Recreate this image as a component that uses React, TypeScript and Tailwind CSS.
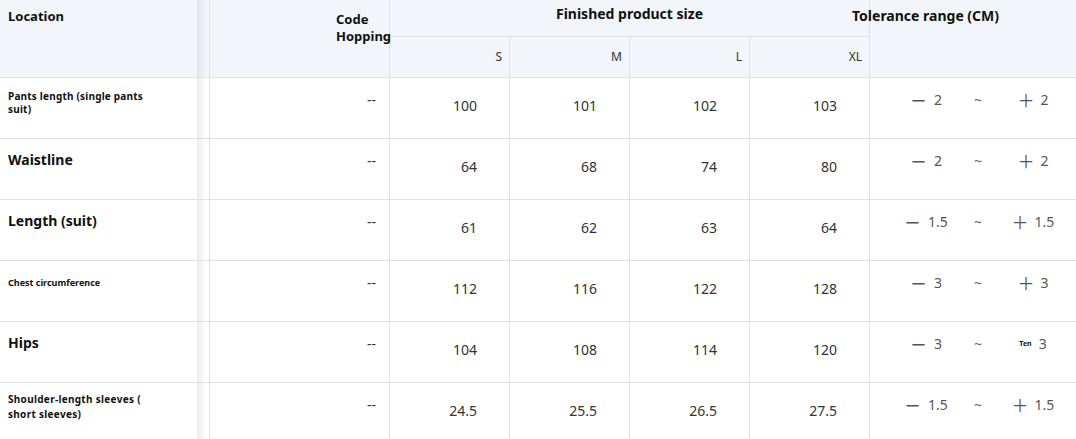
const cols = "grid grid-cols-[197px_13px_180px_120px_120px_120px_120px_1fr]";

type Row = {
  label: string;
  labelClass: string;
  values: string[];
  low: string;
  high: string;
  tenSign?: boolean;
};

const rows: Row[] = [
  {
    label: "Pants length (single pants suit)",
    labelClass: "pt-[12px] text-[10px] leading-[13px] tracking-[0.2px]",
    values: ["100", "101", "102", "103"],
    low: "2",
    high: "2",
  },
  {
    label: "Waistline",
    labelClass: "pt-[11px] text-[14px] leading-5",
    values: ["64", "68", "74", "80"],
    low: "2",
    high: "2",
  },
  {
    label: "Length (suit)",
    labelClass: "pt-[11px] text-[14px] leading-5",
    values: ["61", "62", "63", "64"],
    low: "1.5",
    high: "1.5",
  },
  {
    label: "Chest circumference",
    labelClass: "pt-[12px] text-[9px] leading-5",
    values: ["112", "116", "122", "128"],
    low: "3",
    high: "3",
  },
  {
    label: "Hips",
    labelClass: "pt-[11px] text-[14px] leading-5",
    values: ["104", "108", "114", "120"],
    low: "3",
    high: "3",
    tenSign: true,
  },
  {
    label: "Shoulder-length sleeves ( short sleeves)",
    labelClass: "pt-[9px] text-[10px] leading-[15px] tracking-[0.3px]",
    values: ["24.5", "25.5", "26.5", "27.5"],
    low: "1.5",
    high: "1.5",
  },
];

const shadow =
  "bg-[linear-gradient(to_right,rgba(0,0,0,0.07),rgba(0,0,0,0.02)_60%,rgba(0,0,0,0)_80%)] border-r border-[#e1e1e1]";

function Header() {
  return (
    <div className={`${cols} grid-rows-[37px_41px] bg-[#f2f5fa]`}>
      <div className="row-span-2 border-b border-[#e1e1e1] pl-2 pt-[7px] text-[13px] leading-[18px] font-bold text-[#111]">
        Location
      </div>
      <div className={`row-span-2 border-b ${shadow}`} />
      <div className="row-span-2 flex justify-end border-b border-r border-[#e1e1e1] pt-[11px]">
        <div className="mr-[-5px] w-[58px] whitespace-nowrap text-[13px] leading-[17px] font-bold text-[#111]">
          Code
          <br />
          Hopping
        </div>
      </div>
      <div className="col-span-4 border-b border-r border-[#e1e1e1] pt-[4px] text-center text-[14px] leading-5 font-bold text-[#111]">
        Finished product size
      </div>
      <div className="row-span-2 border-b border-[#e1e1e1] pt-[6px]">
        <div className="-ml-[18px] whitespace-nowrap text-[14px] leading-5 font-bold text-[#111]">
          Tolerance range (CM)
        </div>
      </div>
      {["S", "M", "L", "XL"].map((s) => (
        <div
          key={s}
          className="flex items-center justify-end border-b border-r border-[#e1e1e1] pr-[7px] text-[12px] text-[#333]"
        >
          {s}
        </div>
      ))}
    </div>
  );
}

function DataRow({ row }: { row: Row }) {
  return (
    <div className={`${cols} h-[61px]`}>
      <div className={`border-b border-[#e1e1e1] pl-2 ${row.labelClass} font-bold text-[#111]`}>
        <div className="max-w-[145px]">{row.label}</div>
      </div>
      <div className={`border-b ${shadow}`} />
      <div className="border-b border-r border-[#e1e1e1] pr-[13px] pt-[12px] text-right text-[14px] leading-5 text-[#333]">
        --
      </div>
      {row.values.map((v, i) => (
        <div
          key={i}
          className="border-b border-r border-[#e1e1e1] pr-[32px] pt-[18px] text-right text-[14px] leading-5 text-[#333]"
        >
          {v}
        </div>
      ))}
      <div className="border-b border-[#e1e1e1] pt-[12px] pl-[30px]">
        <div className="grid grid-cols-[52px_52px_58px] items-center justify-items-center whitespace-nowrap text-[14px] leading-5 text-[#555]">
          <span className="flex items-center">
            <span className="mr-[7px] font-['Noto_Sans_CJK_SC'] text-[17px] leading-5 font-medium">－</span>
            {row.low}
          </span>
          <span className="text-[14px] text-[#666]">~</span>
          <span className="flex items-center">
            {row.tenSign ? (
              <span className="mr-[7px] text-[7px] font-bold text-[#111]">Ten</span>
            ) : (
              <span className="mr-[6px] font-['Noto_Sans_CJK_SC'] text-[17px] leading-5">＋</span>
            )}
            {row.high}
          </span>
        </div>
      </div>
    </div>
  );
}

export default function App() {
  return (
    <div className="h-[439px] w-[1076px] overflow-hidden bg-white font-['Noto_Sans','Noto_Sans_CJK_SC',sans-serif]">
      <Header />
      {rows.map((r) => (
        <DataRow key={r.label} row={r} />
      ))}
    </div>
  );
}
